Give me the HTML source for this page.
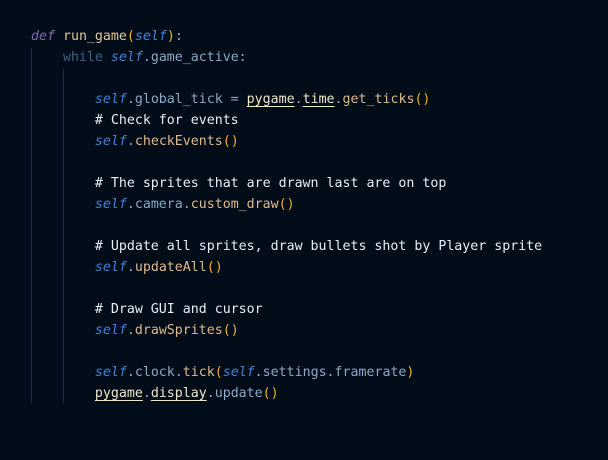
<!DOCTYPE html>
<html><head><style>
body{margin:0;background:#010c19;width:608px;height:460px;overflow:hidden;position:relative}
pre{margin:0;position:absolute;left:31px;top:26px;font-family:"DejaVu Sans Mono","Liberation Mono",monospace;font-size:13.28px;line-height:21px;color:#8aaac8}
.k{color:#7a6fa8;font-style:italic}
.w{color:#3f6286}
.s{color:#3d82dc;font-style:italic}
.f{color:#e0c9a0}
.m{color:#dfb98e}
.p{color:#e8b525}
.c{color:#e8eef4}
.u{color:#f0e6c8;text-decoration:underline;text-decoration-color:#f0e6c8;text-underline-offset:3px}
.g{position:absolute;width:1px;background:#12304f}
</style></head><body>
<div class="g" style="left:31px;top:48px;height:355px"></div>
<div class="g" style="left:63px;top:69px;height:334px"></div>
<pre><span class="k">def</span> <span class="f">run_game</span><span class="p">(</span><span class="s">self</span><span class="p">)</span>:
    <span class="w">while</span> <span class="s">self</span>.game_active:

        <span class="s">self</span>.global_tick = <span class="u">pygame</span>.<span class="u">time</span>.<span class="m">get_ticks</span><span class="p">()</span>
        <span class="c"># Check for events</span>
        <span class="s">self</span>.<span class="m">checkEvents</span><span class="p">()</span>

        <span class="c"># The sprites that are drawn last are on top</span>
        <span class="s">self</span>.camera.<span class="m">custom_draw</span><span class="p">()</span>

        <span class="c"># Update all sprites, draw bullets shot by Player sprite</span>
        <span class="s">self</span>.<span class="m">updateAll</span><span class="p">()</span>

        <span class="c"># Draw GUI and cursor</span>
        <span class="s">self</span>.<span class="m">drawSprites</span><span class="p">()</span>

        <span class="s">self</span>.clock.<span class="m">tick</span><span class="p">(</span><span class="s">self</span>.settings.framerate<span class="p">)</span>
        <span class="u">pygame</span>.<span class="u">display</span>.update<span class="p">()</span>
</pre>
</body></html>
